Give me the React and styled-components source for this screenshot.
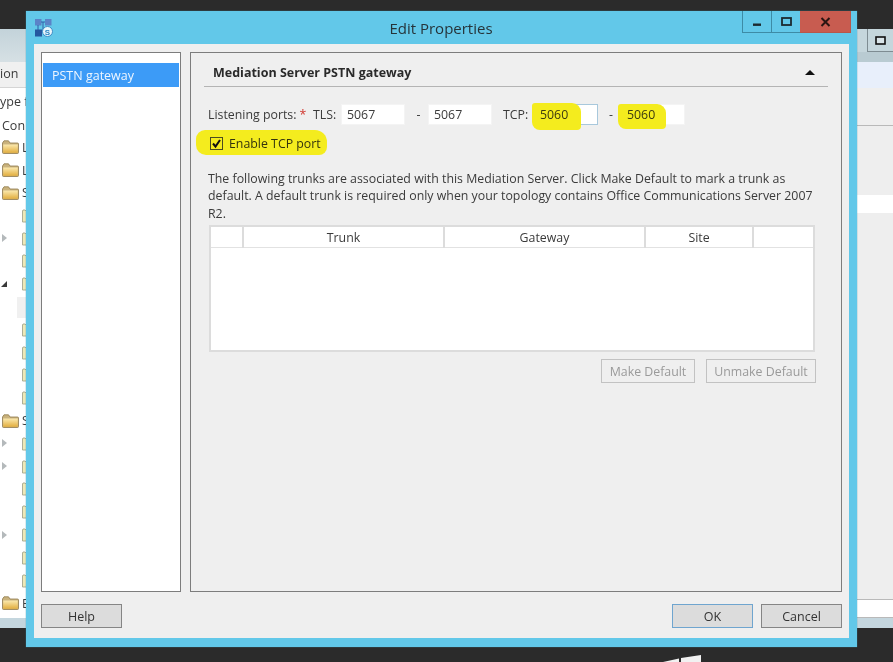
import React from "react";
import styled, { createGlobalStyle } from "styled-components";

const GlobalStyle = createGlobalStyle`
    html, body {
        margin: 0;
        padding: 0;
        background: #2b2b2b;
    }
    body {
        font-family: "Open Sans", "Noto Sans", "Liberation Sans", sans-serif;
        font-size: 12.35px;
        color: #3a3a3a;
    }
`;

const Desktop = styled.div`
    position: relative;
    width: 893px;
    height: 662px;
    overflow: hidden;
    background: #2b2b2b;
    padding-top: 29px;
    box-sizing: border-box;
    filter: blur(0.45px);
`;

/* window behind the dialog */
const BackWindow = styled.div`
    height: 599px;
    display: flex;
    justify-content: space-between;
    background: #ffffff;
`;
const BackLeft = styled.div`
    width: 26px;
    display: flex;
    flex-direction: column;
    overflow: hidden;
    white-space: nowrap;
`;
const BackTitle = styled.div`
    height: 33px;
    flex: none;
    background: linear-gradient(#c3d3da, #d6e0e4);
`;
const BackMenu = styled.div`
    height: 26px;
    flex: none;
    box-sizing: border-box;
    background: #f0f0f0;
    border-bottom: 1px solid #d5d5d5;
    line-height: 23px;
    font-size: 12.5px;
`;
const BackHint = styled.div`
    height: ${(p) => p.$h}px;
    flex: none;
    line-height: ${(p) => p.$h}px;
    font-size: 12.5px;
    padding-left: ${(p) => p.$pad}px;
`;
const Tree = styled.div`
    display: flex;
    flex-direction: column;
    flex: none;
`;
const TreeRow = styled.div`
    height: 22.8px;
    flex: none;
    display: flex;
    align-items: center;
    position: relative;
    font-size: 12.5px;
    padding-left: ${(p) => (p.$open ? 2 : 22)}px;
    gap: 3px;
    svg {
        flex: none;
    }
`;
const Arrow = styled.span`
    position: absolute;
    left: 2px;
    top: 7px;
    width: 0;
    height: 0;
    border-style: solid;
    border-width: 4px 0 4px 5px;
    border-color: transparent transparent transparent #b4b9bb;
`;
const ArrowDown = styled.span`
    position: absolute;
    left: 1px;
    top: 8px;
    width: 0;
    height: 0;
    border-style: solid;
    border-width: 0 0 6px 6px;
    border-color: transparent transparent #3a3a3a transparent;
`;
const SelectedStub = styled.span`
    position: absolute;
    left: 17px;
    top: 1px;
    width: 12px;
    height: 21px;
    background: #f0f0f0;
`;
const BackBottom = styled.div`
    height: 10px;
    flex: none;
    margin-top: auto;
    background: #c4d6de;
`;
const BackRight = styled.div`
    width: 36px;
    display: flex;
    flex-direction: column;
`;
const BackRightTitle = styled.div`
    height: 23px;
    flex: none;
    display: flex;
    background: #c5d6dc;
`;
const BackRightSep = styled.div`
    width: 10px;
    border-right: 1px solid #7e8c92;
`;
const BackRestore = styled.div`
    flex: 1;
    display: flex;
    align-items: center;
    justify-content: center;
    border-bottom: 1px solid #7e8c92;
`;
const Band = styled.div`
    height: ${(p) => p.$h}px;
    flex: none;
    background: ${(p) => p.$bg};
    border-bottom: ${(p) => (p.$line ? "1px solid #b9b9b9" : "none")};
    box-sizing: border-box;
`;

const Taskbar = styled.div`
    height: 34px;
    display: flex;
    justify-content: flex-start;
    align-items: flex-end;
    padding-left: 662px;
`;

/* dialog */
const Dialog = styled.div`
    position: absolute;
    left: 26px;
    top: 11px;
    width: 831px;
    height: 636px;
    box-sizing: border-box;
    background: #62c8e9;
    display: flex;
    flex-direction: column;
    padding: 0 8px 9px 8px;
    box-shadow: 0 0 1px #3f8fa8;
`;
const TitleBar = styled.div`
    height: 33px;
    flex: none;
    display: flex;
    align-items: flex-start;
    position: relative;
`;
const TitleLogo = styled.div`
    width: 20px;
    height: 20px;
    margin-top: 7px;
    flex: none;
`;
const TitleText = styled.div`
    flex: 1;
    text-align: center;
    font-size: 15px;
    line-height: 34px;
    color: #26343a;
    padding-left: 86px;
`;
const WinButtons = styled.div`
    display: flex;
    height: 22px;
    margin-right: -2px;
    flex: none;
`;
const WinButton = styled.div`
    width: ${(p) => p.$w}px;
    height: 22px;
    box-sizing: border-box;
    display: flex;
    align-items: center;
    justify-content: center;
    background: ${(p) => p.$bg || "transparent"};
    border-bottom: 1px solid ${(p) => (p.$close ? "#b7574b" : "#3d8ba6")};
    border-left: ${(p) => (p.$close ? "none" : "1px solid #3d8ba6")};
    border-right: ${(p) => (p.$close ? "1px solid #b7574b" : "none")};
`;
const DialogBody = styled.div`
    flex: 1;
    background: #efefef;
    display: flex;
    flex-direction: column;
    padding: 8px 7px 10px 7px;
`;
const Panes = styled.div`
    height: 540px;
    flex: none;
    display: flex;
    gap: 9px;
`;
const NavPane = styled.div`
    width: 140px;
    box-sizing: border-box;
    flex: none;
    background: #ffffff;
    border: 1px solid #7d7d7d;
    padding: 10px 1px;
`;
const NavItem = styled.div`
    height: 24px;
    background: #3c9bf7;
    color: #eef6ff;
    font-size: 12.5px;
    line-height: 25px;
    padding-left: 9px;
`;
const ContentPane = styled.div`
    flex: 1;
    box-sizing: border-box;
    border: 1px solid #7d7d7d;
    display: flex;
    flex-direction: column;
    padding: 0 13px 0 13px;
`;
const SectionHead = styled.div`
    height: 34px;
    flex: none;
    display: flex;
    align-items: center;
    justify-content: space-between;
    border-bottom: 1px solid #b4b4b4;
    padding: 6px 13px 0 9px;
    box-sizing: border-box;
    font-weight: 700;
    font-size: 12.5px;
    color: #2a2a2a;
`;
const Caret = styled.span`
    width: 0;
    height: 0;
    border-style: solid;
    border-width: 0 5px 5px 5px;
    border-color: transparent transparent #111 transparent;
`;
const PortRow = styled.div`
    height: 21px;
    margin-top: 17px;
    display: flex;
    align-items: center;
    padding-left: 4px;
`;
const PortLabel = styled.span`
    width: ${(p) => p.$w}px;
    flex: none;
    white-space: nowrap;
`;
const Required = styled.span`
    color: #d0342c;
    margin-left: 3px;
`;
const PortField = styled.div`
    position: relative;
    width: ${(p) => p.$w}px;
    height: 21px;
    flex: none;
    box-sizing: border-box;
    background: #ffffff;
    border: 1px solid ${(p) => (p.$focus ? "#a8c8dc" : "#f4f4f4")};
    padding-left: ${(p) => p.$pad || 5}px;
    line-height: 19px;
`;
const PortValue = styled.span`
    position: relative;
    z-index: 1;
    color: ${(p) => (p.$marked ? "#3b3a10" : "#3a3a3a")};
`;
const Marker = styled.span`
    position: absolute;
    left: ${(p) => p.$l}px;
    top: ${(p) => p.$t}px;
    width: ${(p) => p.$w}px;
    height: ${(p) => p.$h}px;
    background: #f4ec1e;
    border-radius: ${(p) => p.$r || "3px 9px 4px 8px"};
`;
const Dash = styled.span`
    width: ${(p) => p.$w}px;
    flex: none;
    box-sizing: border-box;
    padding-left: 4px;
    text-align: center;
`;
const CheckRow = styled.div`
    position: relative;
    height: 14px;
    margin-top: 11px;
    margin-left: 6px;
    display: flex;
    align-items: center;
    gap: 6px;
`;
const CheckBox = styled.span`
    position: relative;
    width: 13px;
    height: 13px;
    flex: none;
    box-sizing: border-box;
    border: 1px solid #4c4c20;
    display: flex;
    align-items: center;
    justify-content: center;
`;
const CheckText = styled.span`
    position: relative;
    color: #34340e;
    white-space: nowrap;
`;
const Description = styled.p`
    margin: 19.5px 0 0 4px;
    line-height: 17.5px;
    color: #3a3a3a;
    white-space: nowrap;
`;
const TrunkTable = styled.div`
    margin: 2.5px 13px 0 5px;
    height: 127px;
    box-sizing: border-box;
    background: #ffffff;
    border: 2px solid #dcdcdc;
    flex: none;
`;
const TrunkHead = styled.div`
    display: grid;
    grid-template-columns: 31px 201px 201px 108px 1fr;
    height: 20px;
    border-bottom: 1px solid #e2e2e2;
`;
const TrunkCol = styled.div`
    text-align: center;
    line-height: 21px;
    border-left: ${(p) => (p.$first ? "none" : "2px solid #dcdcdc")};
`;
const ActionRow = styled.div`
    display: flex;
    justify-content: flex-end;
    gap: 11px;
    margin: 7px 12px 0 0;
`;
const ActionButton = styled.div`
    width: ${(p) => p.$w}px;
    height: 24px;
    box-sizing: border-box;
    border: 1px solid #c2c2c2;
    text-align: center;
    line-height: 23px;
    color: #9a9a9a;
`;
const Footer = styled.div`
    display: flex;
    align-items: flex-start;
    margin-top: 12px;
    gap: 8px;
`;
const FooterButton = styled.div`
    width: 81px;
    height: 24px;
    box-sizing: border-box;
    background: #dcdcdc;
    border: 1px solid ${(p) => (p.$primary ? "#6fa5cf" : "#858585")};
    text-align: center;
    line-height: 24px;
    font-size: 12.5px;
    color: #333333;
    margin-left: ${(p) => (p.$push ? "auto" : 0)};
`;

const FolderIcon = () => (
    <svg width="17" height="14" viewBox="0 0 17 14">
        <defs>
            <linearGradient id="folderFill" x1="0" y1="0" x2="0" y2="1">
                <stop offset="0" stopColor="#fbe9ae" />
                <stop offset="1" stopColor="#e2ae3f" />
            </linearGradient>
        </defs>
        <path d="M0.5 3 L0.5 12.5 Q0.5 13.5 1.5 13.5 L15.5 13.5 Q16.5 13.5 16.5 12.5 L16.5 4 Q16.5 3 15.5 3 L8 3 L6.5 0.8 L2 0.8 Z" fill="#c9b27c" stroke="#8f7a4c" strokeWidth="0.8" />
        <path d="M1.2 4.5 L15.8 4.5 L15.8 12.8 L1.2 12.8 Z" fill="url(#folderFill)" />
    </svg>
);

const PaleFolder = () => (
    <svg width="8" height="14" viewBox="0 0 8 14">
        <path d="M0.5 2 L0.5 13 L8 13 L8 2 L4 2 L3 1 L1 1 Z" fill="#eee9b8" stroke="#a5a78d" strokeWidth="0.9" />
    </svg>
);

const AppLogo = () => (
    <svg width="20" height="20" viewBox="0 0 20 20">
        <rect x="1" y="1" width="6.5" height="6.5" fill="#5b83c8" />
        <rect x="11" y="1" width="6.5" height="6.5" fill="#5b83c8" />
        <rect x="1" y="11.5" width="7" height="7" fill="#24579f" />
        <path d="M4 7 L4 12 M7 4 L11 4 M9 4 L9 14 L11 14" stroke="#2f5fa8" strokeWidth="1" fill="none" />
        <circle cx="13.5" cy="13.5" r="5" fill="#e8f5fb" stroke="#3d8cc6" strokeWidth="1" />
        <text x="13.5" y="16.5" fontSize="8" fontWeight="700" textAnchor="middle" fill="#2a86c4" fontFamily="Liberation Sans">S</text>
    </svg>
);

const folderRows = [
    { open: true, text: "L" },
    { open: true, text: "L" },
    { open: true, text: "S" },
    {},
    { arrow: true },
    {},
    { down: true },
    { selected: true },
    {},
    {},
    {},
    {},
    { open: true, text: "S" },
    { arrow: true },
    { arrow: true },
    {},
    {},
    { arrow: true },
    {},
    {},
    { open: true, text: "E" },
];

function App() {
    return (
        <Desktop>
            <GlobalStyle />
            <BackWindow>
                <BackLeft>
                    <BackTitle />
                    <BackMenu>ion</BackMenu>
                    <BackHint $h={28} $pad={0}>ype f</BackHint>
                    <BackHint $h={20} $pad={2}>Con</BackHint>
                    <Tree>
                        {folderRows.map((row, i) => (
                            <TreeRow key={i} $open={row.open}>
                                {row.arrow && <Arrow />}
                                {row.down && <ArrowDown />}
                                {row.selected && <SelectedStub />}
                                {row.open ? <FolderIcon /> : !row.selected && <PaleFolder />}
                                {row.text}
                            </TreeRow>
                        ))}
                    </Tree>
                    <BackBottom />
                </BackLeft>
                <BackRight>
                    <BackRightTitle>
                        <BackRightSep />
                        <BackRestore>
                            <svg width="11" height="9" viewBox="0 0 11 9">
                                <rect x="1" y="1" width="9" height="7" fill="#d9e4e8" stroke="#111" strokeWidth="1.6" />
                            </svg>
                        </BackRestore>
                    </BackRightTitle>
                    <Band $h={10} $bg="#b9cbd2" />
                    <Band $h={26} $bg="#e8effb" />
                    <Band $h={38} $bg="#efefef" $line />
                    <Band $h={69} $bg="#eeeeee" />
                    <Band $h={18} $bg="#ffffff" />
                    <Band $h={387} $bg="#eeeeee" $line />
                    <Band $h={18} $bg="#ffffff" $line />
                    <Band $h={10} $bg="#c4d6de" />
                </BackRight>
            </BackWindow>
            <Taskbar>
                <svg width="40" height="7" viewBox="0 0 40 7">
                    <path d="M1 7 L17 3.5 L17 7 Z M19 3 L39 0 L39 7 L19 7 Z" fill="#f1f1f1" />
                </svg>
            </Taskbar>

            <Dialog>
                <TitleBar>
                    <TitleLogo>
                        <AppLogo />
                    </TitleLogo>
                    <TitleText>Edit Properties</TitleText>
                    <WinButtons>
                        <WinButton $w={29}>
                            <svg width="10" height="10" viewBox="0 0 10 10">
                                <rect x="1" y="6.5" width="8" height="2.4" fill="#1c2a30" />
                            </svg>
                        </WinButton>
                        <WinButton $w={29}>
                            <svg width="11" height="10" viewBox="0 0 11 10">
                                <rect x="1" y="1" width="9" height="7" fill="none" stroke="#1c2a30" strokeWidth="1.8" />
                            </svg>
                        </WinButton>
                        <WinButton $w={51} $bg="#c85c50" $close>
                            <svg width="11" height="10" viewBox="0 0 11 10">
                                <path d="M1.5 1 L9.5 9 M9.5 1 L1.5 9" stroke="#2a1512" strokeWidth="2" />
                            </svg>
                        </WinButton>
                    </WinButtons>
                </TitleBar>
                <DialogBody>
                    <Panes>
                        <NavPane>
                            <NavItem>PSTN gateway</NavItem>
                        </NavPane>
                        <ContentPane>
                            <SectionHead>
                                Mediation Server PSTN gateway
                                <Caret />
                            </SectionHead>
                            <PortRow>
                                <PortLabel $w={105}>Listening ports:<Required>*</Required></PortLabel>
                                <PortLabel $w={28}>TLS:</PortLabel>
                                <PortField $w={64}><PortValue>5067</PortValue></PortField>
                                <Dash $w={23}>-</Dash>
                                <PortField $w={64}><PortValue>5067</PortValue></PortField>
                                <PortLabel $w={11} />
                                <PortLabel $w={30}>TCP:</PortLabel>
                                <PortField $w={65} $pad={6} $focus>
                                    <Marker $l={-2} $t={-2} $w={49} $h={27} />
                                    <PortValue $marked>5060</PortValue>
                                </PortField>
                                <Dash $w={22}>-</Dash>
                                <PortField $w={65} $pad={6}>
                                    <Marker $l={-3} $t={-1} $w={48} $h={25} />
                                    <PortValue $marked>5060</PortValue>
                                </PortField>
                            </PortRow>
                            <CheckRow>
                                <Marker $l={-14} $t={-6} $w={131} $h={25} $r="9px 12px 8px 10px" />
                                <CheckBox>
                                    <svg width="11" height="11" viewBox="0 0 11 11">
                                        <path d="M2 5.5 L4.5 8.5 L9 2" fill="none" stroke="#111" strokeWidth="2" />
                                    </svg>
                                </CheckBox>
                                <CheckText>Enable TCP port</CheckText>
                            </CheckRow>
                            <Description>
                                The following trunks are associated with this Mediation Server. Click Make Default to mark a trunk as<br />
                                default. A default trunk is required only when your topology contains Office Communications Server 2007<br />
                                R2.
                            </Description>
                            <TrunkTable>
                                <TrunkHead>
                                    <TrunkCol $first />
                                    <TrunkCol>Trunk</TrunkCol>
                                    <TrunkCol>Gateway</TrunkCol>
                                    <TrunkCol>Site</TrunkCol>
                                    <TrunkCol />
                                </TrunkHead>
                            </TrunkTable>
                            <ActionRow>
                                <ActionButton $w={94}>Make Default</ActionButton>
                                <ActionButton $w={110}>Unmake Default</ActionButton>
                            </ActionRow>
                        </ContentPane>
                    </Panes>
                    <Footer>
                        <FooterButton>Help</FooterButton>
                        <FooterButton $primary $push>OK</FooterButton>
                        <FooterButton>Cancel</FooterButton>
                    </Footer>
                </DialogBody>
            </Dialog>
        </Desktop>
    );
}

export default App;
